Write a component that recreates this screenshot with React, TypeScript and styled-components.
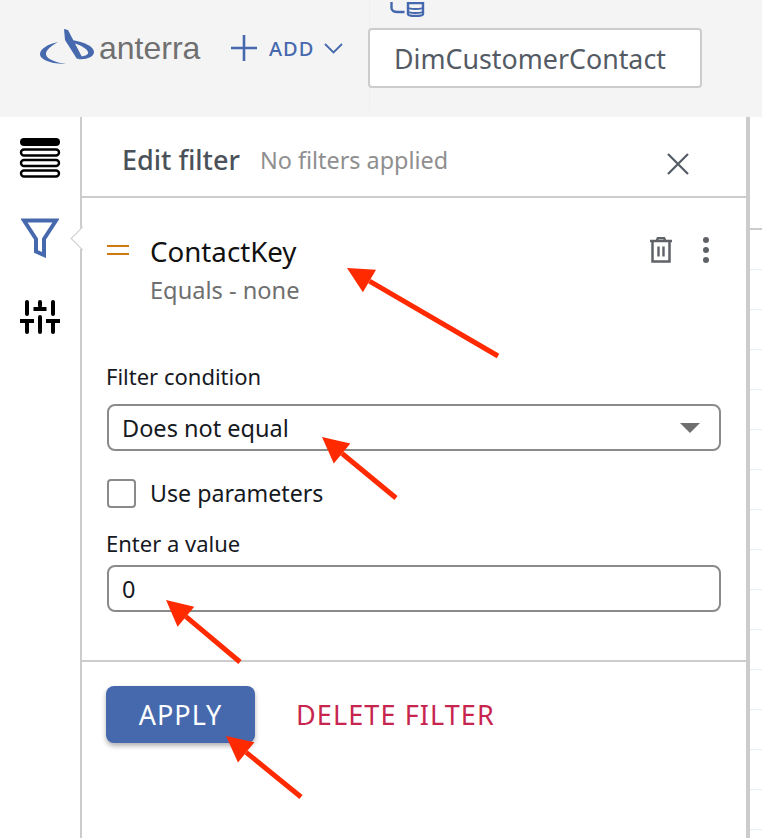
import React from 'react'
import styled, { createGlobalStyle } from 'styled-components'

const blue = '#4669ae'
const line = '#cccccc'

const GlobalStyle = createGlobalStyle`
  html, body {
    margin: 0;
    padding: 0;
    background: #fff;
    font-family: 'Noto Sans', 'Open Sans', sans-serif;
  }
  * { box-sizing: border-box; }
`

const Page = styled.div`
  position: relative;
  width: 762px;
  height: 838px;
  overflow: hidden;
  display: flex;
  flex-direction: column;
`

// Header
const TopBar = styled.header`
  height: 117px;
  flex: none;
  background: #f4f4f4;
  display: flex;
  align-items: flex-start;
`

const Brand = styled.div`
  display: flex;
  align-items: center;
  padding: 30px 0 0 40px;
  width: 231px;
  height: 66px;
`

const BrandName = styled.span`
  font-family: 'Liberation Sans', Arial, sans-serif;
  font-size: 32px;
  color: #707070;
  margin-left: -1px;
`

const AddButton = styled.div`
  display: flex;
  align-items: center;
  height: 28px;
  margin-top: 34px;
  width: 138px;
  color: ${blue};
  font-size: 20px;
  font-weight: 500;
  letter-spacing: 1px;
`

const AddLabel = styled.span`
  margin: 0 10px 0 12px;
`

const TableColumn = styled.div`
  display: flex;
  flex-direction: column;
  align-items: flex-start;
  width: 334px;
  height: 110px;
  border-left: 1px solid #efefef;
`

const TableIcon = styled.div`
  height: 28px;
  margin-left: 20px;
  color: ${blue};
`

const TableChip = styled.div`
  width: 334px;
  height: 60px;
  margin-left: -2px;
  padding-left: 24px;
  display: flex;
  align-items: center;
  background: #fff;
  border: 2px solid ${line};
  border-radius: 4px;
  font-size: 26.8px;
  color: #545b64;
`

// Body
const Body = styled.div`
  flex: 1;
  display: flex;
  min-height: 0;
`

const Rail = styled.nav`
  width: 80px;
  flex: none;
  display: flex;
  flex-direction: column;
  align-items: center;
  padding-top: 21px;
`

const RailSlot = styled.div<{ $mt: number }>`
  display: flex;
  justify-content: center;
  margin-top: ${(p) => p.$mt}px;
`

const Panel = styled.section`
  position: relative;
  width: 670px;
  flex: none;
  display: flex;
  flex-direction: column;
  border-left: 2px solid ${line};
  border-right: 4px solid ${line};
`

const Notch = styled.span`
  position: absolute;
  left: -8px;
  top: 113px;
  width: 17px;
  height: 17px;
  background: #fff;
  border-left: 1px solid ${line};
  border-bottom: 1px solid ${line};
  transform: rotate(45deg);
`

const PanelHead = styled.div`
  height: 81px;
  flex: none;
  border-bottom: 2px solid ${line};
  display: flex;
  align-items: center;
  padding: 6px 56px 0 40px;
  gap: 20px;
`

const PanelTitle = styled.h2`
  margin: 0;
  font-size: 27px;
  line-height: 36px;
  font-weight: 500;
  color: #4b5159;
`

const PanelHint = styled.span`
  font-size: 23.4px;
  color: #8f8f8f;
  flex: 1;
`

const CloseIcon = styled.svg`
  margin-top: 8px;
`

const Form = styled.div`
  height: 464px;
  flex: none;
  padding: 0 25px;
  border-bottom: 2px solid ${line};
  display: flex;
  flex-direction: column;
`

const FieldRow = styled.div`
  display: flex;
  align-items: flex-start;
  height: 164px;
  padding-top: 35px;
`

const EqualsMark = styled.span`
  width: 22px;
  height: 10px;
  margin: 12px 21px 0 0;
  border-top: 2.5px solid #d17a10;
  border-bottom: 2.5px solid #d17a10;
  flex: none;
`

const FieldText = styled.div`
  flex: 1;
`

const FieldName = styled.div`
  font-size: 27.7px;
  line-height: 36px;
  color: #111;
`

const FieldMeta = styled.div`
  font-size: 23.6px;
  line-height: 30px;
  margin-top: 6px;
  color: #6f6f6f;
`

const FieldActions = styled.div`
  display: flex;
  align-items: center;
  gap: 30px;
  padding-top: 3px;
  color: #5f6368;
  margin-right: 11px;
`

const Label = styled.label`
  display: block;
  margin-left: -1px;
  font-size: 22px;
  line-height: 28px;
  color: #16191f;
`

const Control = styled.div<{ $mt: number }>`
  height: 47px;
  margin-top: ${(p) => p.$mt}px;
  padding: 0 13px;
  display: flex;
  align-items: center;
  justify-content: space-between;
  border: 2px solid #8a8a8a;
  border-radius: 8px;
  font-size: 23.5px;
  color: #16191f;
`

const Caret = styled.span`
  width: 0;
  height: 0;
  margin-right: 6px;
  border-left: 10px solid transparent;
  border-right: 10px solid transparent;
  border-top: 10px solid #6f6f6f;
`

const CheckRow = styled.div`
  display: flex;
  align-items: center;
  gap: 14px;
  margin: 27px 0 21px;
  height: 30px;
  font-size: 23.2px;
  color: #16191f;
`

const CheckBox = styled.span`
  width: 29px;
  height: 29px;
  flex: none;
  border: 2px solid #8a8a8a;
  border-radius: 4px;
`

const Actions = styled.div`
  display: flex;
  align-items: center;
  gap: 41px;
  padding: 24px 0 0 24px;
`

const ApplyButton = styled.button`
  width: 149px;
  height: 57px;
  border: 0;
  border-radius: 8px;
  background: ${blue};
  color: #fff;
  font: inherit;
  font-size: 27px;
  letter-spacing: 1px;
  box-shadow: 0 3px 5px rgba(0, 0, 0, 0.3);
`

const DeleteButton = styled.span`
  font-size: 27px;
  letter-spacing: 1.1px;
  color: #c7254e;
`

// Table peeking out behind the panel
const GridBehind = styled.div`
  flex: 1;
  display: flex;
  flex-direction: column;
  padding-top: 111px;
`

const GridHeadLine = styled.div`
  height: 2px;
  flex: none;
  background: ${line};
`

const GridRows = styled.div`
  flex: 1;
  background-image: linear-gradient(to bottom, transparent 39px, #e6f0fb 39px);
  background-size: 100% 40px;
`

const Annotations = styled.svg`
  position: absolute;
  inset: 0;
  pointer-events: none;
`

const arrows = [
  { tail: [498, 356], tip: [347, 268] },
  { tail: [396, 498], tip: [322, 437] },
  { tail: [240, 662], tip: [166, 600] },
  { tail: [301, 797], tip: [226, 736] },
]

const Arrow: React.FC<{ tail: number[]; tip: number[] }> = ({ tail, tip }) => {
  const [x1, y1] = tail
  const [x2, y2] = tip
  const len = Math.hypot(x2 - x1, y2 - y1)
  const ux = (x2 - x1) / len
  const uy = (y2 - y1) / len
  const bx = x2 - ux * 26
  const by = y2 - uy * 26
  const px = -uy * 13
  const py = ux * 13
  return (
    <g>
      <line x1={x1} y1={y1} x2={bx} y2={by} stroke="#ff2a00" strokeWidth={5} />
      <polygon points={`${x2},${y2} ${bx + px},${by + py} ${bx - px},${by - py}`} fill="#ff2a00" />
    </g>
  )
}

const App: React.FC = () => (
  <>
    <GlobalStyle />
    <Page>
      <TopBar>
        <Brand>
          <svg width="60" height="38" viewBox="0 0 60 38" fill={blue}>
            <path d="M18 13C8 15 0 20 0 25C0 31 12 35 26 35C13 33 6 29 6 25C6 21 11 17 18 13Z" />
            <path d="M24 0L28 1L42 28L37 30L25 11Z" />
            <path d="M30 11C42 12 54 17 54 23C54 28 46 31 38 30L41 27.500C46 27 49 25 48 23C47 19 38 15 31 13.500Z" />
          </svg>
          <BrandName>anterra</BrandName>
        </Brand>
        <AddButton>
          <svg width="26" height="26" viewBox="0 0 26 26" stroke={blue} strokeWidth="2.6" fill="none">
            <path d="M13 0v26M0 13h26" />
          </svg>
          <AddLabel>ADD</AddLabel>
          <svg width="19" height="11" viewBox="0 0 19 11" stroke={blue} strokeWidth="1.8" fill="none">
            <path d="M1 1l8.500 8.500L18 1" />
          </svg>
        </AddButton>
        <TableColumn>
          <TableIcon>
            <svg width="35" height="15" viewBox="0 0 35 15" fill="none" stroke={blue} strokeWidth="2.4">
              <path d="M1.500 0v6c0 3 3 4 6 4h7" />
              <path d="M18 1h15v11c0 1.500-3 2-7.500 2s-7.500-.5-7.500-2z" />
              <path d="M18 5c0 1.500 3 2 7.500 2s7.500-.5 7.500-2M18 9c0 1.500 3 2 7.500 2s7.500-.5 7.500-2" strokeWidth="1.800" />
            </svg>
          </TableIcon>
          <TableChip>DimCustomerContact</TableChip>
        </TableColumn>
      </TopBar>
      <Body>
        <Rail>
          <RailSlot $mt={0}>
            <svg width="42" height="42" viewBox="0 0 42 42">
              <rect x="1" y="0" width="40" height="8" rx="4" fill="#000" />
              <g fill="none" stroke="#000" strokeWidth="2.4">
                <rect x="2" y="11.500" width="38" height="6" rx="3" />
                <rect x="2" y="22" width="38" height="6" rx="3" />
                <rect x="2" y="32.500" width="38" height="6" rx="3" />
              </g>
            </svg>
          </RailSlot>
          <RailSlot $mt={38}>
            <svg width="38" height="40" viewBox="0 0 38 40" fill="none" stroke={blue} strokeWidth="4">
              <path d="M3 2.500h32L23 21v16l-8-3.500V21z" />
            </svg>
          </RailSlot>
          <RailSlot $mt={42}>
            <svg width="40" height="34" viewBox="0 0 40 34" stroke="#000" strokeWidth="4" fill="none" strokeLinecap="round">
              <path d="M7 2v12M20 2v4M20 17v15M33 2v12M7 23v9M33 23v9" />
              <path d="M0 21h14M13.500 9h13M26 21h14" strokeLinecap="butt" />
            </svg>
          </RailSlot>
        </Rail>
        <Panel>
          <Notch />
          <PanelHead>
            <PanelTitle>Edit filter</PanelTitle>
            <PanelHint>No filters applied</PanelHint>
            <CloseIcon width="24" height="24" viewBox="0 0 24 24" stroke="#545b64" strokeWidth="2.200" fill="none">
              <path d="M2 2l20 20M22 2L2 22" />
            </CloseIcon>
          </PanelHead>
          <Form>
            <FieldRow>
              <EqualsMark />
              <FieldText>
                <FieldName>ContactKey</FieldName>
                <FieldMeta>Equals - none</FieldMeta>
              </FieldText>
              <FieldActions>
                <svg width="22" height="26" viewBox="0 0 22 26" fill="none" stroke="#5f6368">
                  <path d="M0 4h22M7 3l1-2h6l1 2" strokeWidth="2.500" />
                  <path d="M2.500 5v19.500h17V5" strokeWidth="2.500" />
                  <path d="M8.500 9.500v10M13.500 9.500v10" strokeWidth="2.400" />
                </svg>
                <svg width="8" height="28" viewBox="0 0 8 28" fill="#5f6368">
                  <circle cx="4" cy="4" r="3" />
                  <circle cx="4" cy="14" r="3" />
                  <circle cx="4" cy="24" r="3" />
                </svg>
              </FieldActions>
            </FieldRow>
            <Label>Filter condition</Label>
            <Control $mt={14}>
              Does not equal
              <Caret />
            </Control>
            <CheckRow>
              <CheckBox />
              Use parameters
            </CheckRow>
            <Label>Enter a value</Label>
            <Control $mt={8}>0</Control>
          </Form>
          <Actions>
            <ApplyButton>APPLY</ApplyButton>
            <DeleteButton>DELETE FILTER</DeleteButton>
          </Actions>
        </Panel>
        <GridBehind>
          <GridHeadLine />
          <GridRows />
        </GridBehind>
      </Body>
      <Annotations viewBox="0 0 762 838" width="762" height="838">
        {arrows.map((a) => (
          <Arrow key={a.tip.join()} tail={a.tail} tip={a.tip} />
        ))}
      </Annotations>
    </Page>
  </>
)

export default App
